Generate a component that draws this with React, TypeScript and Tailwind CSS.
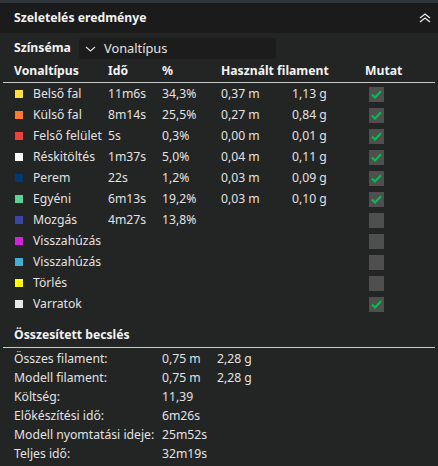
const rows = [
  { name: "Belső fal", color: "bg-[#ffdf3f]", time: "11m6s", pct: "34,3%", m: "0,37 m", g: "1,13 g", on: true },
  { name: "Külső fal", color: "bg-[#ff7a30]", time: "8m14s", pct: "25,5%", m: "0,27 m", g: "0,84 g", on: true },
  { name: "Felső felület", color: "bg-[#f0403c]", time: "5s", pct: "0,3%", m: "0,00 m", g: "0,01 g", on: true },
  { name: "Réskitöltés", color: "bg-[#ffffff]", time: "1m37s", pct: "5,0%", m: "0,04 m", g: "0,11 g", on: true },
  { name: "Perem", color: "bg-[#003a70]", time: "22s", pct: "1,2%", m: "0,03 m", g: "0,09 g", on: true },
  { name: "Egyéni", color: "bg-[#5ad394]", time: "6m13s", pct: "19,2%", m: "0,03 m", g: "0,10 g", on: true },
  { name: "Mozgás", color: "bg-[#3a46a6]", time: "4m27s", pct: "13,8%", m: "", g: "", on: false },
  { name: "Visszahúzás", color: "bg-[#d223d9]", time: "", pct: "", m: "", g: "", on: false },
  { name: "Visszahúzás", color: "bg-[#44aed4]", time: "", pct: "", m: "", g: "", on: false },
  { name: "Törlés", color: "bg-[#ffff00]", time: "", pct: "", m: "", g: "", on: false },
  { name: "Varratok", color: "bg-[#e8e8e8]", time: "", pct: "", m: "", g: "", on: true },
];

const summary = [
  { label: "Összes filament:", a: "0,75 m", b: "2,28 g" },
  { label: "Modell filament:", a: "0,75 m", b: "2,28 g" },
  { label: "Költség:", a: "11,39", b: "" },
  { label: "Előkészítési idő:", a: "6m26s", b: "" },
  { label: "Modell nyomtatási ideje:", a: "25m52s", b: "" },
  { label: "Teljes idő:", a: "32m19s", b: "" },
];

const cols = "grid grid-cols-[94px_54px_59px_71px_73px_1fr] items-center";

function Check({ on }: { on: boolean }) {
  return (
    <div className="flex h-[15px] w-[15px] items-center justify-center bg-[#4f4f4f]">
      {on && (
        <svg width="11" height="9" viewBox="0 0 11 9" fill="none">
          <path d="M1 4.5 L4 7.5 L10 1.2" stroke="#00c050" strokeWidth="2" />
        </svg>
      )}
    </div>
  );
}

export default function App() {
  return (
    <div className="h-[466px] w-[438px] overflow-hidden bg-[#232424] font-['Noto_Sans',sans-serif] text-[12.2px] text-[#e2e2e2]">
      <div className="h-[3px] bg-[#30363a]" />
      <div className="flex h-[30px] items-center justify-between bg-[#1b1b1b] pl-[14px] pr-[7px]">
        <span className="text-[12.2px] font-bold text-[#f2f2f2]">Szeletelés eredménye</span>
        <svg width="12" height="10" viewBox="0 0 12 10" fill="none" stroke="#e8e8e8" strokeWidth="1.3">
          <path d="M1 5 L6 1 L11 5" />
          <path d="M1 9 L6 5 L11 9" />
        </svg>
      </div>

      <div className="mt-[5px] flex items-center pl-[14px]">
        <span className="w-[65px] text-[12.2px] font-bold text-[#f2f2f2]">Színséma</span>
        <div className="flex h-[21px] w-[197px] items-center rounded-[3px] bg-[#1c1c1c] pl-[6px]">
          <svg width="11" height="6" viewBox="0 0 11 6" fill="none" stroke="#dedede" strokeWidth="1.1">
            <path d="M1 1 L5.5 5 L10 1" />
          </svg>
          <span className="ml-[8px] text-[12.8px]">Vonaltípus</span>
        </div>
      </div>

      <div className={`${cols} mx-[3px] mt-[2px] h-[22px] border-b border-[#c8c8c8] pl-[11px] text-[12.2px] font-bold text-[#f2f2f2]`}>
        <span>Vonaltípus</span>
        <span>Idő</span>
        <span>%</span>
        <span className="col-span-2">Használt filament</span>
        <span>Mutat</span>
      </div>

      <div className="pl-[14px] pt-[1px]">
        {rows.map((r, i) => (
          <div key={i} className={`${cols} h-[21px]`}>
            <div className="flex items-center whitespace-nowrap">
              <span className={`ml-[1px] h-[8px] w-[8px] ${r.color}`} />
              <span className="ml-[10px]">{r.name}</span>
            </div>
            <span>{r.time}</span>
            <span>{r.pct}</span>
            <span>{r.m}</span>
            <span>{r.g}</span>
            <div className="pl-[4px]">
              <Check on={r.on} />
            </div>
          </div>
        ))}
      </div>

      <div className="mx-[3px] mt-[9px] flex h-[24px] items-center border-b border-[#c8c8c8] pl-[11px] text-[12.2px] font-bold text-[#f2f2f2]">
        Összesített becslés
      </div>

      <div className="flex flex-col pl-[14px] pt-[1px]">
        {summary.map((s, i) => (
          <div key={i} className="grid h-[19px] grid-cols-[148px_55px_1fr] items-center whitespace-nowrap leading-[19px]">
            <span>{s.label}</span>
            <span>{s.a}</span>
            <span>{s.b}</span>
          </div>
        ))}
      </div>
    </div>
  );
}
